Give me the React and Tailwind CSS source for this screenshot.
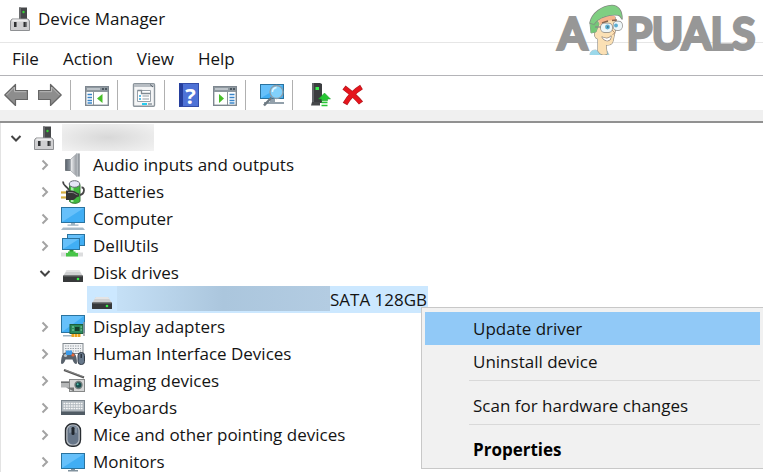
import React, { useState } from 'react';

const PcIcon = () => (
  <svg className="w-5 h-6 shrink-0" viewBox="0 0 20 24" aria-hidden="true">
    <path d="M9 0.5h8v12H9z" fill="#454749" />
    <path d="M9 0.5h2v12H9z" fill="#6a6c6e" />
    <circle cx="13.5" cy="5" r="1.2" fill="#35d435" />
    <path d="M2 12h16l1.5 2v9.5H.5V14z" fill="#cfcfd1" stroke="#8e9093" strokeWidth="1" />
    <path d="M2.5 12.5h15l.5 2H2z" fill="#ededee" />
    <path d="M4 15h3v5H4zM13.5 15h3v5h-3z" fill="#303234" />
    <path d="M6 15h1v5H6zM15.5 15h1v5h-1z" fill="#77797b" />
  </svg>
);

const AudioIcon = () => (
  <svg className="w-6 h-6" viewBox="0 0 24 24" aria-hidden="true">
    <defs>
      <linearGradient id="cone" x1="0" x2="1">
        <stop offset="0" stopColor="#f4f5f6" />
        <stop offset="1" stopColor="#8d9299" />
      </linearGradient>
      <linearGradient id="magnet" x1="0" x2="1">
        <stop offset="0" stopColor="#59626c" />
        <stop offset="1" stopColor="#9da5ae" />
      </linearGradient>
    </defs>
    <path d="M4.500 6.500h6v11h-6z" fill="url(#magnet)" stroke="#555b61" strokeWidth=".7" />
    <path d="M9.500 6.500 16 .5v23L9.500 17.500z" fill="url(#cone)" stroke="#979ca1" strokeWidth=".7" />
    <path d="M15.500 .5h3v23h-3z" fill="#b5babf" />
    <path d="M17.500 .5h1v23h-1z" fill="#757b81" />
  </svg>
);

const BatteryIcon = () => (
  <svg className="w-6 h-6" viewBox="0 0 24 24" aria-hidden="true">
    <path d="M8.500 4.500h10.500v17c-3 2.500-7.500 2.500-10.500 0z" fill="#3fb83d" stroke="#3b7c3a" />
    <path d="M10 7h2.500v15H10z" fill="#a7eea5" />
    <ellipse cx="13.500" cy="4" rx="5.300" ry="3.300" fill="#e6e6f8" stroke="#686a78" />
    <path d="M2 1.500c0 5 4 4 6 9M19 15c5-1 5-8 1.500-7.500" fill="none" stroke="#454545" strokeWidth="1.800" />
    <path d="M0 12.500h6M0 17.500h6" stroke="#c69b2b" strokeWidth="2" />
    <path d="M0 12h6M0 17h6" stroke="#f3d36a" strokeWidth=".7" />
    <path d="M5 10.500h6c3 0 4 2.500 7 3v3c-3 0-4 4-7 3.500H5z" fill="#353535" />
    <path d="M7 12.500h4c2.500 0 3.500 2 5.500 2.300" fill="none" stroke="#858585" />
  </svg>
);

const Screen = ({ x = 0, y = 0, w = 24, h = 16 }) => (
  <g>
    <rect x={x + 0.5} y={y + 0.5} width={w - 1} height={h - 1} fill="#41aef4" stroke="#2a739f" />
    <path d={`M${x + 1} ${y + h - 1}V${y + 1}H${x + w - 1}z`} fill="#66c0fa" />
  </g>
);

const ComputerIcon = () => (
  <svg className="w-6 h-6" viewBox="0 0 24 24" aria-hidden="true">
    <Screen y={0} />
    <path d="M10 16h4v1.500h-4zM6.500 17.500h11v1.200h-11z" fill="#9db3c1" />
    <path d="M2 20.500h20l2 2.500H0z" fill="#a9bac6" />
    <path d="M2 20.500h20" stroke="#d5dee4" />
  </svg>
);

const DellIcon = () => (
  <svg className="w-6 h-6" viewBox="0 0 24 24" aria-hidden="true">
    <Screen x={6} y={0} w={18} h={12} />
    <Screen x={1} y={4} w={18} h={12} />
    <path d="M8.500 16h4v4h-4z" fill="#2f9d2f" />
    <path d="M0 18.500h22v4H0z" fill="#dcddde" />
    <path d="M7 17.500h7.500v1.500h2.500v3.500H5V19h2z" fill="#48c548" />
  </svg>
);

const DiskIcon = () => (
  <svg className="w-5 h-6 shrink-0" viewBox="0 0 20 24" aria-hidden="true">
    <path d="M4 9h12l4 6H0z" fill="#cfd0d1" />
    <path d="M4 9h12l1.500 2h-15z" fill="#e4e4e5" />
    <rect y="14.500" width="20" height="6.500" rx=".6" fill="#37393a" />
    <path d="M.5 15h19" stroke="#707273" />
    <circle cx="15" cy="18" r="1.300" fill="#38ee48" />
  </svg>
);

const DisplayIcon = () => (
  <svg className="w-6 h-6" viewBox="0 0 24 24" aria-hidden="true">
    <Screen y={0} h={18} />
    <path d="M2 20h9v1.500H2z" fill="#9db3c1" />
    <rect x="9" y="9.500" width="13" height="9" fill="#2c8a5c" stroke="#1c5f3d" />
    <rect x="14" y="12" width="4.500" height="4" fill="#143f2b" />
    <path d="M11 12h2M11 15h2M19.500 12h1.500M19.500 15h1.500" stroke="#8fd9ac" />
    <path d="M23 7v14" stroke="#909698" strokeWidth="1.500" />
    <path d="M10.500 19h9v3h-9z" fill="#eba321" />
    <path d="M13.500 19v3M16.500 19v3" stroke="#fff0b8" strokeWidth=".6" />
  </svg>
);

const HidIcon = () => (
  <svg className="w-6 h-6" viewBox="0 0 24 24" aria-hidden="true">
    <rect x="2" y="1.500" width="20" height="10" fill="#f0f2f4" stroke="#82898f" />
    <path d="M4 4h16M4 6.500h16M4 9h16" stroke="#9aa1a7" strokeDasharray="1.500 1" />
    <path d="M2.500 11.500c2-2.500 9-2.500 11 0 2 2 2.500 6 2.500 10-2 1.500-3.500-1-4.500-4h-7c-1 3-2.500 5.500-4.500 4 0-4 .5-8 2.500-10z" fill="#59626c" />
    <circle cx="4.500" cy="13.500" r="1.600" fill="#b9c0c6" />
    <path d="M5 8.500h6v4.500H5z" fill="#3d9be9" />
    <circle cx="12" cy="13" r="1.600" fill="#e5673b" />
    <rect x="17" y="10.500" width="6.500" height="12" rx="3" fill="#67788b" stroke="#323b46" />
    <path d="M20.200 12v4" stroke="#222a33" strokeWidth="1.300" />
  </svg>
);

const ImagingIcon = () => (
  <svg className="w-6 h-6" viewBox="0 0 24 24" aria-hidden="true">
    <path d="M3 1 23 8.500" stroke="#555" strokeWidth="2.200" />
    <path d="M4 1 22 7.500" stroke="#a5a5a5" strokeWidth=".6" />
    <path d="M0 12.500h9v6H0z" fill="#b5b7b8" />
    <path d="M0 12.500h9v1.500H0z" fill="#6d6f70" />
    <rect x="8.500" y="10.500" width="15" height="12" fill="#d4d5d5" stroke="#868888" />
    <circle cx="17.500" cy="16" r="4.200" fill="#747d7d" />
    <circle cx="17.500" cy="16" r="2.800" fill="#174f4d" />
    <circle cx="16.700" cy="15.200" r="1" fill="#57bfae" />
    <path d="M5 18.500h8v4z" fill="#727474" />
  </svg>
);

const KeyboardIcon = () => (
  <svg className="w-6 h-6" viewBox="0 0 24 24" aria-hidden="true">
    <rect x=".5" y="4.500" width="23" height="14" fill="#aeb6bc" stroke="#7b858d" />
    <path d="M2.500 7.500h19M2.500 10h19M2.500 12.500h19" stroke="#f7f8f8" strokeWidth="1.500" strokeDasharray="1.800 .7" />
    <path d="M0 15.500h24V19H0z" fill="#505b64" />
  </svg>
);

const MouseIcon = () => (
  <svg className="w-6 h-6" viewBox="0 0 24 24" aria-hidden="true">
    <rect x="4.500" y=".8" width="15" height="22.500" rx="6.500" fill="#b8bec5" stroke="#292d32" strokeWidth="1.400" />
    <rect x="6.500" y="2.500" width="11" height="19" rx="5" fill="#667588" />
    <path d="M8 4c3-1 5-1 8 0v6c-3-1-5-1-8 0z" fill="#8391a1" />
    <rect x="10.500" y="4" width="3" height="8" rx="1.300" fill="#20262d" />
  </svg>
);

const MonitorIcon = () => (
  <svg className="w-6 h-6" viewBox="0 0 24 24" aria-hidden="true">
    <Screen y={3} h={16} />
    <path d="M10 19h4v1.500h-4zM7 20h10v1.500H7z" fill="#81929e" />
  </svg>
);

const ArrowIcon = ({ flip }) => (
  <svg className={flip ? 'w-6 h-6 -scale-x-100' : 'w-6 h-6'} viewBox="0 0 24 24" aria-hidden="true">
    <path d="M.8 12 11.500 1.500V7.500h12v9h-12V22.500z" fill="#8d8d8d" stroke="#666" strokeWidth="1.200" strokeLinejoin="round" />
    <path d="M2.500 12 10.500 4v4.700h11.800" fill="none" stroke="#b9b9b9" />
  </svg>
);

const PaneIcon = ({ right }) => (
  <svg className="w-6 h-6" viewBox="0 0 24 24" aria-hidden="true">
    <rect x=".7" y="3.700" width="22.600" height="18.600" fill="#fff" stroke="#7e8790" strokeWidth="1.400" />
    <path d="M1 4h22v5H1z" fill="#8e989f" />
    <path d="M2 6h13" stroke="#cdd3d8" strokeWidth="1.500" />
    <path d="M17 6h2M20 6h2" stroke="#38434d" strokeWidth="1.500" />
    <path d={right ? 'M14.500 9v13' : 'M8.500 9v13'} stroke="#8b949b" />
    <path
      d={right ? 'M16.500 11.500h5M16.500 14.500h5M16.500 17.500h5M16.500 20h5' : 'M2.500 11.500h4.500M2.500 14.500h4.500M2.500 17.500h4.500M2.500 20h4.500'}
      stroke="#3985c9"
      strokeWidth="1.500"
    />
    <path d={right ? 'M6 11v9l5-4.500z' : 'M17.500 11v9l-5.500-4.500z'} fill="#48be29" />
  </svg>
);

const PropertiesIcon = () => (
  <svg className="w-6 h-6" viewBox="0 0 24 24" aria-hidden="true">
    <rect x="1.500" y=".7" width="21" height="22.600" rx="1" fill="#f4f5f6" stroke="#8c959c" strokeWidth="1.400" />
    <path d="M2 1h20v3H2z" fill="#b7bdc3" />
    <path d="M18 1.500l3 2.500" stroke="#555f68" />
    <path d="M5.500 7.500h13v11h-13z" fill="#fff" stroke="#97a0a8" />
    <path d="M5.500 7.500h4v3h9" fill="none" stroke="#818b93" strokeWidth="1.300" />
    <path d="M7 13h2M7 16h2" stroke="#2fa8de" strokeWidth="1.300" />
    <path d="M10.500 13h6.500M10.500 16h6.500" stroke="#929ba3" strokeWidth="1.200" />
    <path d="M10 21h5" stroke="#27ccef" strokeWidth="2" />
    <path d="M16 21h4" stroke="#a8b0b6" strokeWidth="2" />
  </svg>
);

const HelpIcon = () => (
  <span className="flex items-center justify-center w-5 h-6 border border-[#344da7] border-l-4 border-l-[#263f9d] bg-[#4e72d6] text-white font-bold text-[22px] leading-none">
    ?
  </span>
);

const ScanIcon = () => (
  <svg className="w-6 h-6" viewBox="0 0 24 24" aria-hidden="true">
    <Screen y={1} h={15} />
    <path d="M10 16h5v3h-5zM4 19h20v2H4z" fill="#92a0ab" />
    <path d="M11.500 14.500 4 22.500" stroke="#6d7880" strokeWidth="2.500" />
    <circle cx="16.500" cy="9" r="6.500" fill="#97dcff" fillOpacity=".75" stroke="#8b9da9" strokeWidth="1.300" />
    <path d="M12.500 9a4.500 4.500 0 0 1 4-4.500" fill="none" stroke="#e2f6ff" strokeWidth="1.500" />
  </svg>
);

const UpdateIcon = () => (
  <svg className="w-6 h-6" viewBox="0 0 24 24" aria-hidden="true">
    <path d="M5 0h8l2 1v19H5z" fill="#3b3d3f" />
    <path d="M5 0h2v20H5z" fill="#626568" />
    <path d="M5 19h8v3.500H4z" fill="#46484a" />
    <rect x="8.500" y="4" width="3.500" height="3" fill="#3af14f" />
    <path d="M17.500 10 23.500 16h-3v1.800h-6V16h-3z" fill="#27c534" stroke="#179d25" strokeWidth=".5" />
    <path d="M14.500 19.500h6M14.500 22.500h6" stroke="#27c534" strokeWidth="1.600" />
  </svg>
);

const RemoveIcon = () => (
  <svg className="w-6 h-6" viewBox="0 0 24 24" aria-hidden="true">
    <path d="M3 4.500c4 3 12 9 17 15.500M20.500 4C14 8 8 14 4 21" fill="none" stroke="#b41b22" strokeWidth="5.200" />
    <path d="M3.500 5c4 3 11 9 16 14.500M20 4.500C14 8 8 14 4.500 20.300" fill="none" stroke="#e5141c" strokeWidth="4" />
  </svg>
);

const Chevron = ({ open }) => (
  <svg className="w-3 h-3" viewBox="0 0 12 12" fill="none" aria-hidden="true">
    {open ? (
      <path d="M1.500 4 6 8.500 10.500 4" stroke="#444" strokeWidth="2" />
    ) : (
      <path d="M3.500 1.500 8 6 3.500 10.500" stroke="#a3a3a3" strokeWidth="2" />
    )}
  </svg>
);

const Mascot = () => (
  <svg className="w-10 h-[52px]" viewBox="0 0 38 52" aria-hidden="true">
    <path d="M2 52c0-4 3-5 6-5l7 5zM15 52l4-4 2 4z" fill="#9bd8ea" stroke="#8f9a9c" strokeWidth=".6" />
    <path d="M7 29c-1-8 2-12 5-14l15-1c1 6 1 13-1 19-1 5-1 9-6 9h-2l1 9c-4 2-7 0-9-3V36c-3-1-4-4-3-7z" fill="#fbe0b4" stroke="#8c8880" strokeWidth="1.200" />
    <path d="M11 17c5-4 11-5 16-4v4c-5 0-10 1-15 5z" fill="#f6b48d" />
    <path d="M2 20l7-3 2 4-3 8-5 1z" fill="#74c778" stroke="#8b9a88" />
    <path d="M2 20C4 10 14 3 24 2.500c6 0 10 5 10 13.500-1-2-2-4-4-4C20 11 10 15 6 21z" fill="#7fcf82" stroke="#838b82" strokeWidth="1.500" />
    <path d="M14 20l6-2M24 17.500l5-.5" stroke="#86634e" strokeWidth="1.400" />
    <rect x="13" y="20.500" width="11" height="8.500" rx="3.500" fill="#eef6f8" stroke="#858585" strokeWidth="1.400" />
    <rect x="25.500" y="18.500" width="8.500" height="8.500" rx="3.500" fill="#eef6f8" stroke="#858585" strokeWidth="1.400" />
    <path d="M7 24l6 0" stroke="#858585" strokeWidth="1.200" />
    <circle cx="19.500" cy="24" r="2.400" fill="#5badd0" />
    <circle cx="28" cy="22.500" r="1.900" fill="#5badd0" />
    <circle cx="19.800" cy="24" r=".8" fill="#34525e" />
    <path d="M24 27l3 3-2.500 1.500" fill="none" stroke="#b99577" />
    <path d="M14 34c4 2 7 2 9-1 0 5-5 7-9 1z" fill="#fff" stroke="#85786f" strokeWidth="1.100" />
  </svg>
);

const tools = [
  [{ label: 'Back', icon: <ArrowIcon /> }, { label: 'Forward', icon: <ArrowIcon flip /> }],
  [{ label: 'Show/Hide Console Tree', icon: <PaneIcon /> }],
  [{ label: 'Properties', icon: <PropertiesIcon /> }],
  [{ label: 'Help', icon: <HelpIcon /> }, { label: 'Show/Hide Action Pane', icon: <PaneIcon right /> }],
  [{ label: 'Scan for hardware changes', icon: <ScanIcon /> }],
  [{ label: 'Update driver', icon: <UpdateIcon /> }, { label: 'Uninstall device', icon: <RemoveIcon /> }],
];

const devices = [
  { name: 'Audio inputs and outputs', icon: <AudioIcon /> },
  { name: 'Batteries', icon: <BatteryIcon /> },
  { name: 'Computer', icon: <ComputerIcon /> },
  { name: 'DellUtils', icon: <DellIcon /> },
  { name: 'Disk drives', icon: <DiskIcon />, child: 'SATA 128GB' },
  { name: 'Display adapters', icon: <DisplayIcon /> },
  { name: 'Human Interface Devices', icon: <HidIcon /> },
  { name: 'Imaging devices', icon: <ImagingIcon /> },
  { name: 'Keyboards', icon: <KeyboardIcon /> },
  { name: 'Mice and other pointing devices', icon: <MouseIcon /> },
  { name: 'Monitors', icon: <MonitorIcon /> },
];

const DeviceRow = ({ device }) => {
  const [open, setOpen] = useState(Boolean(device.child));

  return (
    <li>
      <button
        onClick={() => setOpen(!open)}
        aria-expanded={open}
        className="flex items-center h-[27px] pl-[38px] whitespace-nowrap"
      >
        <Chevron open={open} />
        <span className="flex justify-center w-6 ml-2.5 mr-2">{device.icon}</span>
        {device.name}
      </button>
      {open && device.child && (
        <ul className="pl-[86px]">
          <li className="flex items-center w-fit h-[27px] pl-[5px] pr-px bg-[#cce8ff]">
            <DiskIcon />
            <span className="w-[213px] h-[25px] ml-[5px] mb-0.5 bg-linear-to-r from-[#c5e0f6] via-[#abc6dd] to-[#b3cce2]" />
            {device.child}
          </li>
        </ul>
      )}
    </li>
  );
};

const ContextMenu = () => (
  <div
    role="menu"
    className="absolute left-[421px] right-0 top-[307px] flex flex-col border border-r-0 border-[#c8c8c8] bg-[#f1f1f1] px-[3px] pt-1 pb-0.5"
  >
    <button role="menuitem" className="h-[33px] pl-12 text-left bg-[#91c9f7]">Update driver</button>
    <button role="menuitem" className="h-[33px] pl-12 text-left">Uninstall device</button>
    <hr className="ml-11 mt-0.5 mb-2 border-[#d9d9d9]" />
    <button role="menuitem" className="h-[33px] pl-12 text-left">Scan for hardware changes</button>
    <hr className="ml-11 mt-0.5 mb-2 border-[#d9d9d9]" />
    <button role="menuitem" className="h-[33px] pl-12 text-left font-bold text-black">Properties</button>
  </div>
);

const App = () => {
  return (
    <div className="relative h-screen overflow-hidden bg-white text-[#141414] text-[17px] leading-6 font-['Open_Sans','Noto_Sans',sans-serif]">
      <header className="flex items-center h-[43px] pl-2.5 pb-1 gap-2 border-b border-[#e6e6e6]">
        <PcIcon />
        <h1>Device Manager</h1>
      </header>

      <nav className="flex items-center h-8 pl-3 gap-6">
        {['File', 'Action', 'View', 'Help'].map((item) => (
          <button key={item}>{item}</button>
        ))}
      </nav>

      <div className="flex items-end h-[35px] pl-1 border-t border-[#b4b4b8]">
        {tools.map((group, i) => (
          <div
            key={i}
            className="flex items-center gap-2.5 h-[30px] pr-2 mr-3.5 border-r border-[#b0b0b0] last:border-r-0"
          >
            {group.map((tool) => (
              <button key={tool.label} aria-label={tool.label} className="w-6">{tool.icon}</button>
            ))}
          </div>
        ))}
      </div>
      <div className="h-[13px] bg-[#f0f0f0] border-b-2 border-[#919191]" />

      <main className="pt-px border-l border-[#e3e3e3]">
        <div className="flex items-center h-[27px] pl-[9px]">
          <Chevron open />
          <span className="ml-3 mr-2"><PcIcon /></span>
          <span className="w-[92px] h-[27px] bg-radial from-[#d8d8d8] to-[#f3f3f3]" />
        </div>
        <ul>
          {devices.map((device) => (
            <DeviceRow key={device.name} device={device} />
          ))}
        </ul>
      </main>

      <ContextMenu />

      <div className="absolute right-2 top-[3px] flex items-center text-[#979797] text-[42px] leading-none font-normal font-['Lato',sans-serif] [-webkit-text-stroke:4px_#979797] [paint-order:stroke] [stroke-linejoin:round]">
        <span className="pt-2">A</span>
        <Mascot />
        <span className="pt-2">PUALS</span>
      </div>
    </div>
  );
};

export default App;
